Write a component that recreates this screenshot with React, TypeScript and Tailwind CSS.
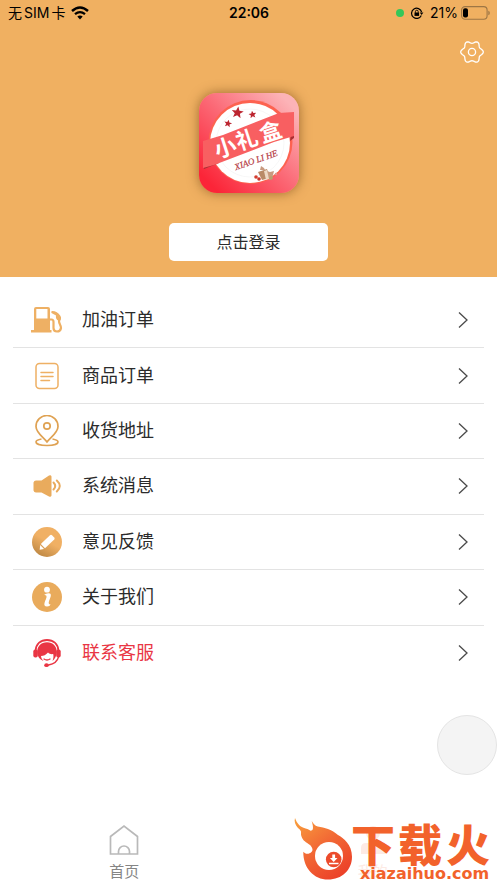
import type { ReactNode } from 'react';

interface MenuItem {
  label: string;
  icon: ReactNode;
  highlight?: boolean;
}

// Six-lobed outline for the settings icon
const gearPoints = Array.from({ length: 72 }, (_, i) => {
  const a = (i * Math.PI) / 36;
  const r = 10 + 1.3 * Math.cos(6 * a);
  return `${(12 + r * Math.cos(a)).toFixed(2)},${(12 + r * Math.sin(a)).toFixed(2)}`;
}).join(' ');

const star = 'M0-6 1.7-1.9 6-1.8 2.6 1 3.8 5.2 0 2.8-3.8 5.2-2.6 1-6-1.8-1.7-1.9Z';

function FuelIcon() {
  return (
    <svg viewBox="0 0 32 32" className="h-8 w-8" fill="#eeb064">
      <path
        fillRule="evenodd"
        d="M5 3h12a2 2 0 0 1 2 2v21h1.500v2.500H0V26h3V5a2 2 0 0 1 2-2Zm.3 2v9.500h11.200V5Z"
      />
      <path
        d="M19 15.500h1.500q2 0 2 2.500v6q0 3.500 3.500 3.500t4-3.500c0-3-2-4-2-7 0-2 .8-2.500.8-4"
        fill="none"
        stroke="#eeb064"
        strokeWidth="2.200"
      />
      <path d="M21 7q5-.2 8.500 5c1 2 .5 4-.5 5l-2.800-1c-1.200-1-1.500-3-1.200-4.500L20.500 9q-.8-1.500.5-2Z" />
    </svg>
  );
}

function OrderIcon() {
  return (
    <svg viewBox="0 0 32 32" className="h-8 w-8" fill="none" stroke="#eeb064" strokeLinecap="round">
      <rect x="5" y="3.500" width="22" height="25" rx="3.500" strokeWidth="1.500" />
      <path d="M10 12.500h12M10 16.500h12M10 20.500h8.500" strokeWidth="1.500" />
    </svg>
  );
}

function AddressIcon() {
  return (
    <svg viewBox="0 0 32 32" className="h-8 w-8" fill="none" stroke="#dfa253" strokeWidth="1.700">
      <path d="M16 27C12 22 5 17.500 5 11.500a11 11 0 0 1 22 0C27 17.500 20 22 16 27Z" />
      <circle cx="16" cy="11" r="3.200" />
      <path d="M10.500 24c-3 .5-5.500 1.500-5.500 3 0 2 4.500 3.500 11 3.500s11-1.500 11-3.500c0-1.500-2.500-2.500-5.500-3" />
    </svg>
  );
}

function MessageIcon() {
  return (
    <svg viewBox="0 0 32 32" className="h-8 w-8" fill="#e9ab5d">
      <path d="M5 10.500h5.500l7.500-5q2-1 2.500 1v19q-.5 2-2.500 1l-7.500-4H5q-2 0-2.500-2v-8q.5-2 2.500-2Z" />
      <path
        d="M22.500 12.500q3.500 3.500 0 7M25.800 10.500q6 5.500 0 11"
        fill="none"
        stroke="#e9ab5d"
        strokeWidth="2"
        strokeLinecap="round"
      />
    </svg>
  );
}

function FeedbackIcon() {
  return (
    <svg viewBox="0 0 32 32" className="h-8 w-8">
      <defs>
        <linearGradient id="feedback" x1="0.2" y1="1" x2="0.7" y2="0.1">
          <stop offset="0" stopColor="#b98441" />
          <stop offset="0.6" stopColor="#f0b064" />
        </linearGradient>
      </defs>
      <circle cx="16" cy="16" r="15" fill="url(#feedback)" />
      <path fill="#fff" d="M9.800 18 19 9.200q1-.9 2 0l2.200 2.200q.9 1 0 2L14 22.300Z" />
      <path fill="#fff" d="m9.200 19 3.800 3.900-4.300.9Z" />
    </svg>
  );
}

function AboutIcon() {
  return (
    <svg viewBox="0 0 32 32" className="h-8 w-8">
      <circle cx="16" cy="16" r="15" fill="#e9ab5c" />
      <circle cx="16" cy="8.700" r="2.900" fill="#fff" />
      <path
        fill="#fff"
        d="M13 14q3-2.500 6-1.500c1 .5 1 2 .5 3.500-1 3-2.500 5.500-1.500 7q.7.500 1.500 0-.5 2.500-3.500 2.500c-2.500 0-3-1.500-2.500-3.500.5-2.500 2.500-5.500 2-7-.4-.9-1.500-1-2.500-1Z"
      />
    </svg>
  );
}

function ServiceIcon() {
  return (
    <svg viewBox="0 0 32 32" className="h-8 w-8">
      <path d="M4.500 14C5 6.500 10 3 16 3s11 3.500 11.500 11" fill="none" stroke="#e93644" strokeWidth="1.900" />
      <rect x="2.300" y="12.500" width="4.500" height="8" rx="2" fill="#e93644" />
      <rect x="25.200" y="12.500" width="4.500" height="8" rx="2" fill="#e93644" />
      <path
        fill="#e93644"
        d="M16 5.300c6 0 9.800 4 9.800 9.700 0 3.500-1.800 7-4.300 9 1-3 1.200-4.500.7-7-2 .5-4-.3-5.200-1.500-2 2.500-4.500 3.500-7 3.500 .3 2.500 1 3.300 2.500 5C8.500 22.500 6.200 19 6.200 15 6.200 9.300 10 5.300 16 5.300Z"
      />
      <path
        d="M13 22q3 2 6 0M27.500 20c-1 4.500-5 7-10 8"
        fill="none"
        stroke="#e93644"
        strokeWidth="1.300"
        strokeLinecap="round"
      />
      <ellipse cx="15.500" cy="28.200" rx="2.300" ry="1.900" fill="#e93644" />
    </svg>
  );
}

const menuItems: MenuItem[] = [
  { label: '加油订单', icon: <FuelIcon /> },
  { label: '商品订单', icon: <OrderIcon /> },
  { label: '收货地址', icon: <AddressIcon /> },
  { label: '系统消息', icon: <MessageIcon /> },
  { label: '意见反馈', icon: <FeedbackIcon /> },
  { label: '关于我们', icon: <AboutIcon /> },
  { label: '联系客服', icon: <ServiceIcon />, highlight: true },
];

function StatusBar() {
  return (
    <div className="grid h-[26px] grid-cols-3 items-center pr-[7px] pl-2 text-[14px] leading-[26px] text-black">
      <div className="flex items-center gap-[6px]">
        <span className="flex gap-[2px]">
          <span>无</span>
          <span>SIM</span>
          <span>卡</span>
        </span>
        <svg viewBox="0 0 18 14" className="h-[14px] w-[18px]" fill="none" stroke="#000">
          <path d="M1 5q8-7 16 0" strokeWidth="2.500" />
          <path d="M4 8.200q5-4.200 10 0" strokeWidth="2.300" />
          <path d="M6.300 10.600q2.700-2 5.400 0L9 13.500Z" fill="#000" stroke="none" />
        </svg>
      </div>
      <div className="text-center text-[14px] font-semibold">22:06</div>
      <div className="flex items-center justify-end gap-[6px]">
        <span className="h-2 w-2 rounded-full bg-[#34c759]" />
        <svg viewBox="0 0 14 12" className="h-3 w-[14px]" fill="none" stroke="#000" strokeWidth="1.200">
          <path d="M11.300 8.500A5.100 5.100 0 1 1 11.600 5" />
          <path d="M9.800 5.500h3.600l-1.800 2.600Z" fill="#000" stroke="none" />
          <rect x="4.500" y="5.500" width="4.600" height="3.400" fill="#000" stroke="none" />
          <path d="M5.400 5.800V4.600q0-1.400 1.400-1.400t1.400 1.400v1.200" strokeWidth="0.900" />
        </svg>
        <span className="flex items-center gap-[3px]">
          21%
          <svg viewBox="0 0 29 14" className="h-[14px] w-[29px]">
            <rect x="0.600" y="0.600" width="25.500" height="12.600" rx="3.500" fill="none" stroke="#9d7645" strokeWidth="1.100" />
            <rect x="2" y="2.200" width="5" height="9.400" rx="2" />
            <path d="M27.300 4.800q1.500.5 1.500 2.200t-1.500 2.200Z" fill="#9d7645" />
          </svg>
        </span>
      </div>
    </div>
  );
}

function AppLogo() {
  return (
    <svg
      viewBox="0 0 100 100"
      className="h-[100px] w-[100px] rounded-[18px] shadow-[0_0_12px_rgba(90,50,10,0.55)]"
      role="img"
      aria-label="小礼盒"
    >
      <defs>
        <linearGradient id="logo-bg" x1="0.1" y1="0.9" x2="0.9" y2="0.1">
          <stop offset="0" stopColor="#fb2538" />
          <stop offset="0.5" stopColor="#fb6875" />
          <stop offset="1" stopColor="#fcb3b7" />
        </linearGradient>
      </defs>
      <rect width="100" height="100" fill="url(#logo-bg)" />
      <circle cx="51.500" cy="49" r="42" fill="#fd6250" />
      <circle cx="51" cy="50" r="40" fill="#fff" />
      <circle cx="51" cy="50" r="34" fill="none" stroke="#f5f5f5" strokeWidth="0.800" />
      <g fill="#bc2530">
        <path d={star} transform="translate(38.500 19.500) rotate(8)" />
        <path d={star} transform="translate(53.500 21.500) rotate(-8) scale(.65)" />
        <path d={star} transform="translate(29 30.500) rotate(12) scale(.65)" />
      </g>
      <path d="m4 70 1 6 15-6Z M95 20v25l-4 3Z" fill="#a92f33" />
      <path d="M4 48 24 42 80 20l15-1v24L75 49 15 72 4 75Z" fill="#f85f61" />
      <g
        transform="rotate(-18 50 50)"
        fill="#fff"
        fontSize="22"
        fontWeight="700"
        textAnchor="middle"
        fontFamily="Noto Sans CJK SC, sans-serif"
      >
        <text x="26" y="55">小</text>
        <text x="49" y="54">礼</text>
        <text x="74" y="54">盒</text>
      </g>
      <text
        transform="rotate(-19 57 67)"
        x="57"
        y="70"
        fill="#b53a43"
        fontSize="9"
        fontStyle="italic"
        textAnchor="middle"
        fontFamily="Liberation Serif, serif"
        stroke="#b53a43"
        strokeWidth="0.200"
      >
        XIAO LI HE
      </text>
      <path d="m59 79 9-3 3 9-8 2Z" fill="#b98967" />
      <path d="m61 77 1-4 3 2 1 2Z M68 78l3 1 4-1-2 8-3 1Z" fill="#c89a80" />
      <path d="m65 78 3-1 2 9-3 1Z" fill="#eed8c5" />
      <circle cx="57" cy="84" r="1.800" fill="#d53c2e" />
      <circle cx="60" cy="86" r="1.800" fill="#c9352c" />
      <circle cx="72" cy="85" r="1.800" fill="#b6a16d" />
      <circle cx="77" cy="81" r="1.200" fill="#db9b92" />
    </svg>
  );
}

function BrandMark() {
  return (
    <svg viewBox="0 0 203 68" className="h-[68px] w-[203px] overflow-visible" role="img" aria-label="下载火 xiazaihuo.com">
      <defs>
        <linearGradient id="flame" x1="0" y1="0" x2="0.7" y2="1">
          <stop offset="0" stopColor="#f9a13d" />
          <stop offset="0.500" stopColor="#f26a35" />
          <stop offset="1" stopColor="#ec4229" />
        </linearGradient>
      </defs>
      <path
        fill="url(#flame)"
        d="M1 3C3 8 5 11 9.500 12.700c3 1.300 5 1.300 7 3 2.500 0 3.500-2 1.200-9.700 2 3 3 4.500 6 5.500C31 13 37 14 44 20c5.500 3 14 9.500 14 21.700 0 13-10 22.800-24 22.800S9 53 9.300 36.700c2 2.500 5.500 3 8.400 0C19.500 35 18 32 16 30 12 27 9 26 7.500 21.500 6 17 9 17 4 13 1 10 0 6 1 3Z"
      />
      <circle cx="35" cy="41" r="14" fill="#fff" />
      <circle cx="39.700" cy="44.500" r="7.800" fill="#ec4b2c" />
      <path d="M38.300 39.500h2.800v3.500h2.400l-3.800 4-3.800-4h2.400Z" fill="#fff" />
      <path d="M35 48.500h9.500" stroke="#fff" strokeWidth="1.500" />
      <g fill="#f2622b" fontSize="44" fontWeight="900" fontFamily="Noto Sans CJK SC, sans-serif">
        <text x="57" y="47">下</text>
        <text x="104" y="47">载</text>
        <text x="152" y="47">火</text>
      </g>
      <text x="66" y="64" fill="#f2622b" fontSize="16" fontWeight="700" fontFamily="DejaVu Sans, sans-serif">
        xiazaihuo.com
      </text>
    </svg>
  );
}

export default function App() {
  return (
    <div className="relative flex min-h-screen flex-col bg-white font-[Inter,'Noto_Sans_CJK_SC',sans-serif] text-[#2b2b2b]">
      <header className="flex flex-col bg-[#f0b061] pb-4">
        <StatusBar />
        <button type="button" aria-label="设置" className="mt-[14px] mr-[13px] self-end">
          <svg viewBox="0 0 24 24" className="h-6 w-6" fill="none" stroke="#fff" strokeWidth="1.300">
            <polygon points={gearPoints} strokeLinejoin="round" />
            <circle cx="12" cy="12" r="3.600" />
          </svg>
        </button>
        <div className="mt-[29px] flex flex-col items-center gap-[30px]">
          <AppLogo />
          <button type="button" className="h-[38px] w-[32%] rounded-[5px] bg-white text-[16px] leading-6">
            点击登录
          </button>
        </div>
      </header>

      <main className="px-[13px] pt-4">
        <ul className="grid min-h-[388px] grid-rows-7">
          {menuItems.map((item) => (
            <li key={item.label} className="border-b border-[#e3e3e3] last:border-b-0">
              <a href="#" className="flex h-full items-center pr-4 pl-[18px]">
                {item.icon}
                <span className={`ml-[19px] flex-1 text-[18px] leading-7 ${item.highlight ? 'text-[#e93644]' : ''}`}>
                  {item.label}
                </span>
                <svg viewBox="0 0 10 16" className="h-4 w-[10px]" fill="none" stroke="#4a4a4a" strokeWidth="1.300">
                  <path d="m1 .500 8 7.500-8 7.500" />
                </svg>
              </a>
            </li>
          ))}
        </ul>
      </main>

      <nav className="mt-auto grid grid-cols-2 text-[15px] leading-5">
        <a href="#" className="flex flex-col items-center gap-[6px] pb-px text-[#858585]">
          <svg viewBox="0 0 30 32" className="h-8 w-[30px]" fill="none" stroke="#b9b9b9" strokeWidth="1.700">
            <path d="M1.500 30V12.500L15 2l13.500 10.500V30Z" />
            <path d="M9.500 30v-2.500a5.500 5.500 0 0 1 11 0V30" />
          </svg>
          首页
        </a>
        <a href="#" className="flex flex-col items-center gap-[6px] pb-px text-[#fdeae4]">
          <svg viewBox="0 0 30 32" className="h-8 w-[30px]" fill="#fdeae4">
            <circle cx="15" cy="9" r="7" />
            <path d="M3 30V24q0-5 5-5h14q5 0 5 5v6Z" />
          </svg>
          我的
        </a>
      </nav>

      <button
        type="button"
        aria-label="悬浮按钮"
        className="absolute right-0 bottom-[108px] h-[60px] w-[60px] rounded-full border border-[#e4e4e4] bg-[#f4f4f4]"
      />
      <div className="absolute right-0 bottom-0">
        <BrandMark />
      </div>
    </div>
  );
}
